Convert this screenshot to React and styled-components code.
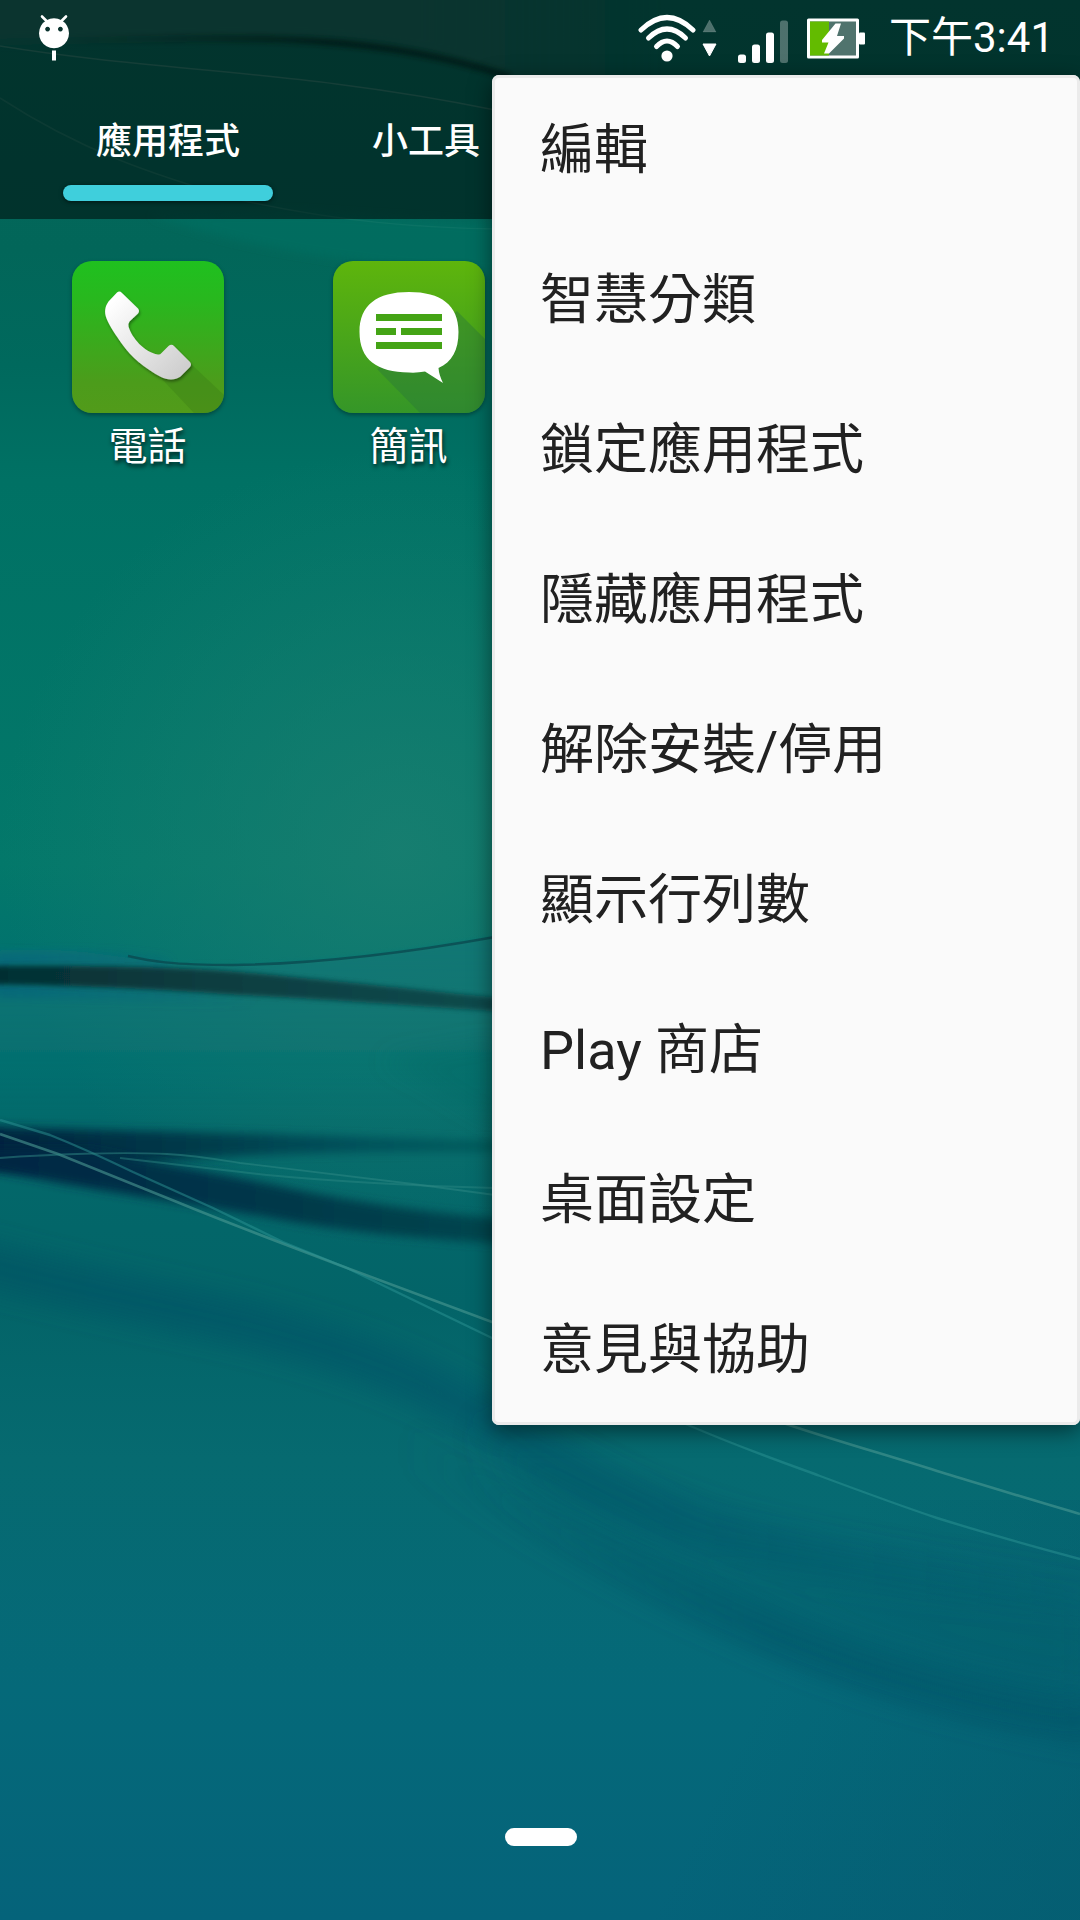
import React from "react";
import styled, { createGlobalStyle } from "styled-components";

const GlobalStyle = createGlobalStyle`
  *, *::before, *::after { box-sizing: border-box; }
  html, body { margin: 0; padding: 0; background: #05657a; }
  body { font-family: Roboto, "Noto Sans CJK TC", sans-serif; }
`;

const Screen = styled.div`
  position: relative;
  width: 1080px;
  height: 1920px;
  overflow: hidden;
  display: flex;
  flex-direction: column;
  color: #fff;
`;

const WallpaperArt = styled.svg`
  position: absolute;
  inset: 0;
  display: block;
`;

const Header = styled.header`
  position: relative;
  flex: none;
  height: 219px;
  display: flex;
  flex-direction: column;
  background: rgba(0, 0, 0, 0.5);
`;

const StatusBar = styled.div`
  height: 75px;
  display: flex;
  align-items: center;
  justify-content: space-between;
  padding: 0 26px 0 36px;
`;

const StatusGroup = styled.div`
  display: flex;
  align-items: center;
`;

const StatusIcon = styled.svg`
  display: block;
  flex: none;
  margin-right: ${(p) => p.$gap || 0}px;
`;

const Clock = styled.time`
  font-size: 42px;
  line-height: 75px;
  white-space: nowrap;
`;

const Tabs = styled.nav`
  display: flex;
  padding-left: 39px;
`;

const Tab = styled.div`
  width: 258px;
  display: flex;
  flex-direction: column;
  align-items: center;
  font-size: 36px;
  font-weight: 500;
  line-height: 54px;
  padding-top: 40px;
`;

const TabMarker = styled.span`
  width: 210px;
  height: 16px;
  margin-top: 16px;
  border-radius: 8px;
  background: #3fcfdc;
  box-shadow: 0 1px 4px rgba(0, 0, 0, 0.6);
`;

const AppGrid = styled.main`
  position: relative;
  flex: 1;
  display: flex;
  align-items: flex-start;
  padding: 42px 0 0 17px;
`;

const AppCell = styled.div`
  width: 261px;
  display: flex;
  flex-direction: column;
  align-items: center;
  gap: 6px;
`;

const AppIcon = styled.svg`
  display: block;
  border-radius: 20px;
  box-shadow: 0 2px 4px rgba(0, 0, 0, 0.35);
`;

const AppLabel = styled.span`
  font-size: 39px;
  line-height: 56px;
  text-shadow: 1px 3px 4px rgba(0, 0, 0, 0.7);
`;

const PageIndicator = styled.footer`
  position: relative;
  flex: none;
  height: 92px;
  display: flex;
  justify-content: center;
  padding-left: 2px;
`;

const PagePill = styled.span`
  width: 72px;
  height: 18px;
  border-radius: 9px;
  background: #fff;
`;

const Menu = styled.ul`
  position: absolute;
  top: 75px;
  right: 0;
  width: 588px;
  margin: 0;
  padding: 0;
  list-style: none;
  display: flex;
  flex-direction: column;
  background: #fafafa;
  border-radius: 7px;
  box-shadow: inset 0 0 0 3px #ebebeb, 0 6px 22px rgba(0, 0, 0, 0.5);
`;

const MenuItem = styled.li`
  height: 150px;
  display: flex;
  align-items: center;
  padding: 2px 48px 0;
  font-size: 54px;
  line-height: 80px;
  color: #212121;
  white-space: pre;
`;

const MENU_ITEMS = [
  "編輯",
  "智慧分類",
  "鎖定應用程式",
  "隱藏應用程式",
  "解除安裝/停用",
  "顯示行列數",
  "Play 商店",
  "桌面設定",
  "意見與協助",
];

function Wallpaper() {
  return (
    <WallpaperArt width="1080" height="1920" viewBox="0 0 1080 1920" aria-hidden="true">
      <defs>
        <linearGradient id="base" x1="0" y1="0" x2="0" y2="1">
          <stop offset="0" stopColor="#04695c" />
          <stop offset="0.13" stopColor="#026659" />
          <stop offset="0.19" stopColor="#00695d" />
          <stop offset="0.25" stopColor="#007164" />
          <stop offset="0.45" stopColor="#03786a" />
          <stop offset="0.52" stopColor="#00706f" />
          <stop offset="0.6" stopColor="#03686a" />
          <stop offset="0.68" stopColor="#036468" />
          <stop offset="0.76" stopColor="#066a70" />
          <stop offset="0.88" stopColor="#056979" />
          <stop offset="1" stopColor="#05637a" />
        </linearGradient>
        <radialGradient id="glow" gradientUnits="userSpaceOnUse" cx="400" cy="850" r="400">
          <stop offset="0" stopColor="#1b7f71" stopOpacity="0.8" />
          <stop offset="1" stopColor="#1b7f71" stopOpacity="0" />
        </radialGradient>
        <linearGradient id="topSheen" gradientUnits="userSpaceOnUse" x1="420" y1="0" x2="660" y2="0">
          <stop offset="0" stopColor="#18695f" />
          <stop offset="1" stopColor="#18695f" stopOpacity="0" />
        </linearGradient>
        <linearGradient id="crest" gradientUnits="userSpaceOnUse" x1="60" y1="0" x2="330" y2="0">
          <stop offset="0" stopColor="#00261c" stopOpacity="0" />
          <stop offset="1" stopColor="#00261c" stopOpacity="0.65" />
        </linearGradient>
        <linearGradient id="midFill" gradientUnits="userSpaceOnUse" x1="0" y1="940" x2="0" y2="1120">
          <stop offset="0" stopColor="#127576" stopOpacity="0.7" />
          <stop offset="0.5" stopColor="#127576" stopOpacity="0.4" />
          <stop offset="1" stopColor="#127576" stopOpacity="0" />
        </linearGradient>
        <linearGradient id="bandA" gradientUnits="userSpaceOnUse" x1="0" y1="0" x2="500" y2="0">
          <stop offset="0" stopColor="#052f33" />
          <stop offset="0.5" stopColor="#0b3f42" />
          <stop offset="1" stopColor="#0b4a4c" />
        </linearGradient>
        <linearGradient id="bandB" gradientUnits="userSpaceOnUse" x1="0" y1="0" x2="500" y2="0">
          <stop offset="0" stopColor="#00243f" />
          <stop offset="0.35" stopColor="#003848" />
          <stop offset="0.7" stopColor="#03505a" />
          <stop offset="1" stopColor="#065c5c" />
        </linearGradient>
        <linearGradient id="bandC" gradientUnits="userSpaceOnUse" x1="0" y1="0" x2="500" y2="0">
          <stop offset="0" stopColor="#002643" />
          <stop offset="0.4" stopColor="#003348" />
          <stop offset="1" stopColor="#04464e" />
        </linearGradient>
        <linearGradient id="edge" gradientUnits="userSpaceOnUse" x1="0" y1="0" x2="260" y2="0">
          <stop offset="0" stopColor="#005c80" stopOpacity="0.5" />
          <stop offset="1" stopColor="#005c80" stopOpacity="0" />
        </linearGradient>
        <linearGradient id="foldA" gradientUnits="userSpaceOnUse" x1="0" y1="0" x2="1080" y2="0">
          <stop offset="0" stopColor="#004f63" stopOpacity="0.55" />
          <stop offset="0.6" stopColor="#00526a" stopOpacity="0.5" />
          <stop offset="1" stopColor="#00526a" stopOpacity="0.12" />
        </linearGradient>
        <linearGradient id="foldB" gradientUnits="userSpaceOnUse" x1="400" y1="0" x2="760" y2="0">
          <stop offset="0" stopColor="#005468" stopOpacity="0" />
          <stop offset="1" stopColor="#005468" stopOpacity="0.55" />
        </linearGradient>
        <linearGradient id="corner" gradientUnits="userSpaceOnUse" x1="760" y1="1700" x2="1080" y2="1860">
          <stop offset="0" stopColor="#045a6b" stopOpacity="0" />
          <stop offset="1" stopColor="#045a6b" stopOpacity="0.5" />
        </linearGradient>
        <filter id="b2" x="-10%" y="-50%" width="120%" height="200%"><feGaussianBlur stdDeviation="2.5" /></filter>
        <filter id="b6" x="-10%" y="-50%" width="120%" height="200%"><feGaussianBlur stdDeviation="5" /></filter>
        <filter id="b14" x="-10%" y="-50%" width="120%" height="200%"><feGaussianBlur stdDeviation="12" /></filter>
        <filter id="b24" x="-20%" y="-50%" width="140%" height="200%"><feGaussianBlur stdDeviation="24" /></filter>
      </defs>
      <rect width="1080" height="1920" fill="url(#base)" />
      <rect width="1080" height="1920" fill="url(#glow)" />
      <rect y="1500" width="1080" height="420" fill="url(#corner)" />
      {/* upper ribbon behind the header */}
      <path d="M-20 -20H700V150C620 120 560 94 510 76C420 42 340 35 240 37C150 39 60 41 -20 42Z" fill="url(#topSheen)" filter="url(#b6)" />
      <path d="M60 41C260 36 380 34 510 77" stroke="url(#crest)" strokeWidth="7" fill="none" filter="url(#b2)" />
      <path d="M0 46C160 72 300 70 495 110" stroke="#5b9488" strokeOpacity="0.45" strokeWidth="1.5" fill="none" />
      <path d="M0 98C80 150 150 174 240 200C340 222 420 228 500 229" stroke="#4c9484" strokeOpacity="0.3" strokeWidth="1.5" fill="none" />
      <path d="M150 215C240 246 320 258 420 268L510 275V225L300 212Z" fill="#007262" fillOpacity="0.6" filter="url(#b6)" />
      {/* middle ribbons */}
      <path d="M-20 952C60 945 110 955 160 963C260 970 380 957 510 934V1120H-20Z" fill="url(#midFill)" filter="url(#b2)" />
      <path d="M-20 961C60 958 120 956 170 965M-20 990C80 990 160 996 260 1000" fill="none" stroke="url(#edge)" strokeWidth="14" filter="url(#b6)" />
      <path d="M-20 966C100 965 180 967 240 972C300 977 420 990 520 1000V1013C440 1008 340 1000 240 995C140 988 60 985 -20 984Z" fill="url(#bandA)" filter="url(#b2)" />
      <path d="M128 956C150 961 170 965 233 965C317 964 400 954 495 937" stroke="#0a4c52" strokeOpacity="0.85" strokeWidth="2.4" fill="none" />
      <path d="M380 1060C430 1080 460 1105 500 1125V1040Z" fill="#0a6660" fillOpacity="0.35" filter="url(#b14)" />
      <path d="M-20 1126C80 1130 200 1132 330 1136L520 1142V1152C340 1151 200 1155 130 1165L-20 1170Z" fill="url(#bandB)" filter="url(#b6)" />
      <path d="M-20 1150H90C150 1162 210 1172 270 1184C340 1200 430 1214 520 1220V1244C420 1240 330 1230 260 1216C180 1202 90 1190 -20 1168Z" fill="url(#bandC)" filter="url(#b6)" />
      {/* lower folds */}
      <path d="M-40 1258C60 1285 150 1302 250 1325C340 1350 420 1372 520 1440C600 1495 700 1530 780 1548C880 1570 980 1585 1100 1595" stroke="url(#foldA)" strokeWidth="46" fill="none" filter="url(#b14)" />
      <path d="M400 1440C560 1535 650 1580 742 1618C850 1668 960 1700 1100 1724" stroke="url(#foldB)" strokeWidth="46" fill="none" filter="url(#b14)" />
      <path d="M480 1420L700 1540L1100 1610V1700C900 1680 700 1590 520 1480Z" fill="#025868" fillOpacity="0.35" filter="url(#b24)" />
      {/* fine highlights */}
      <path d="M0 1134L58 1154C100 1171 140 1187 177 1202C235 1226 290 1246 347 1268L492 1322C590 1357 690 1392 789 1425C840 1442 890 1456 937 1471C990 1487 1035 1501 1080 1514" stroke="#4b9a92" strokeOpacity="0.6" strokeWidth="2.6" fill="none" />
      <path d="M0 1120L50 1135C80 1147 106 1159 133 1172L213 1208L283 1242L347 1268L492 1338C560 1370 625 1399 688 1425C730 1443 770 1458 812 1473C855 1489 895 1504 937 1518C985 1533 1035 1547 1080 1559" stroke="#2c9494" strokeOpacity="0.5" strokeWidth="2.4" fill="none" />
      <path d="M0 1158C50 1154 120 1152 167 1154C200 1156 220 1160 240 1163L413 1184L495 1195" stroke="#2f8a86" strokeOpacity="0.5" strokeWidth="1.8" fill="none" />
      <path d="M120 1158L267 1175C340 1182 420 1186 495 1188" stroke="#2f8a86" strokeOpacity="0.45" strokeWidth="1.8" fill="none" />
    </WallpaperArt>
  );
}

function DebugIcon() {
  return (
    <StatusIcon width="36" height="50" viewBox="36 13.500 36 50">
      <path d="M42 17L47 22M66 17L61 22" stroke="#fff" strokeWidth="2.6" strokeLinecap="round" />
      <path fillRule="evenodd" fill="#fff" d="M54 18.700a15 15 0 1 0 .01 0ZM47.600 27.200a2.400 2.400 0 1 1-.01 0ZM60.400 27.200a2.400 2.400 0 1 1-.01 0Z" />
      <rect x="52" y="51" width="4" height="10" fill="#fff" />
    </StatusIcon>
  );
}

function WifiIcon() {
  return (
    <StatusIcon $gap={20} width="80" height="50" viewBox="638 12.500 80 50">
      <g fill="none" stroke="#fff" strokeWidth="5" strokeLinecap="round">
        <path d="M642 29.500Q668 4.500 694 29.500" />
        <path d="M649.500 37.500Q668 19.500 686.500 37.500" />
        <path d="M657.500 46Q668 35 678.500 46" />
      </g>
      <circle cx="668" cy="55.500" r="5.600" fill="#fff" />
      <path d="M710.500 19.500L717 31.500H704Z" fill="#fff" fillOpacity="0.3" stroke="#fff" strokeOpacity="0.1" strokeLinejoin="round" />
      <path d="M710.500 55.500L717 43.500H704Z" fill="#fff" stroke="#fff" strokeLinejoin="round" />
    </StatusIcon>
  );
}

function SignalIcon() {
  return (
    <StatusIcon $gap={19} width="51" height="50" viewBox="738 12.500 51 50">
      <g fill="#fff">
        <rect x="739" y="54" width="8" height="8.500" rx="2.5" />
        <rect x="753" y="44" width="8" height="18.500" rx="2.5" />
        <rect x="767" y="32" width="8" height="30.500" rx="2.5" />
        <rect x="781" y="20" width="8" height="42.500" rx="2.5" fillOpacity="0.3" />
      </g>
    </StatusIcon>
  );
}

function BatteryIcon() {
  return (
    <StatusIcon $gap={24} width="58" height="50" viewBox="808 12.500 58 50">
      <rect x="808" y="18" width="52" height="40" rx="1.500" fill="#fff" />
      <rect x="860" y="32" width="6" height="12" rx="1" fill="#fff" />
      <rect x="811" y="21" width="46" height="34" fill="#50736d" />
      <rect x="811" y="21" width="19" height="34" fill="#63bb00" />
      <path d="M836.500 23H842L838 35.500H845V38L830 53H825L829.500 42H823V39.500Z" fill="#fff" />
    </StatusIcon>
  );
}

function PhoneIcon() {
  return (
    <AppIcon width="152" height="152" viewBox="0 0 152 152">
      <defs>
        <linearGradient id="phoneBg" x1="0" y1="0" x2="0" y2="1">
          <stop offset="0" stopColor="#1fc01f" />
          <stop offset="0.25" stopColor="#28b81e" />
          <stop offset="0.8" stopColor="#4c9c1b" />
          <stop offset="1" stopColor="#529b1a" />
        </linearGradient>
        <linearGradient id="handset" x1="0" y1="0" x2="1" y2="1">
          <stop offset="0.1" stopColor="#fff" />
          <stop offset="0.9" stopColor="#cfcfcf" />
        </linearGradient>
        <filter id="handShadow" x="-20%" y="-20%" width="140%" height="140%">
          <feDropShadow dx="1" dy="2" stdDeviation="1.500" floodOpacity="0.4" />
        </filter>
      </defs>
      <rect width="152" height="152" fill="url(#phoneBg)" />
      <path d="M119 103L152 134V152H122L88 116Z" fill="#2f6a10" fillOpacity="0.22" />
      <path
        d="M45 31.500Q47.500 29.500 50 32L66 47.500Q68 50 66 52.500L57.500 60.500Q56 62.500 56.500 65.500C60 77 72 91 86 93.500Q88 94 89.500 92L96.500 85Q99.500 82.500 102 85L118 101Q120 103.500 118 106L108.500 115.500C103 119.500 95 119 89 116C73 107.500 59 96 50 83C44.500 75 38 66 34.500 57.500C32 51 33 45.500 36.500 40.500Z"
        fill="url(#handset)"
        filter="url(#handShadow)"
      />
    </AppIcon>
  );
}

function MessageIcon() {
  return (
    <AppIcon width="152" height="152" viewBox="0 0 152 152">
      <defs>
        <linearGradient id="smsBg" x1="0" y1="0" x2="0" y2="1">
          <stop offset="0" stopColor="#5eb50c" />
          <stop offset="1" stopColor="#359628" />
        </linearGradient>
      </defs>
      <rect width="152" height="152" fill="url(#smsBg)" />
      <path d="M124 50L152 78V152H87L44 108Z" fill="#28783a" fillOpacity="0.42" />
      <path
        d="M76 31C108 31 125.500 44 125.500 71C125.500 89 119 101 105.500 107Q106 114 110 122L92 110.500Q84 112 76 111.500C44 111 26.500 99 26.500 71C26.500 44 44 31 76 31Z"
        fill="#fff"
      />
      <g fill="#44a415">
        <rect x="43" y="53" width="66" height="7" />
        <rect x="43" y="67" width="20" height="7" />
        <rect x="68" y="67" width="41" height="7" />
        <rect x="43" y="81" width="66" height="7" />
      </g>
    </AppIcon>
  );
}

export default function App() {
  return (
    <>
      <GlobalStyle />
      <Screen>
        <Wallpaper />
        <Header>
          <StatusBar>
            <DebugIcon />
            <StatusGroup>
              <WifiIcon />
              <SignalIcon />
              <BatteryIcon />
              <Clock>下午3:41</Clock>
            </StatusGroup>
          </StatusBar>
          <Tabs>
            <Tab>
              應用程式
              <TabMarker />
            </Tab>
            <Tab>小工具</Tab>
          </Tabs>
        </Header>
        <AppGrid>
          <AppCell>
            <PhoneIcon />
            <AppLabel>電話</AppLabel>
          </AppCell>
          <AppCell>
            <MessageIcon />
            <AppLabel>簡訊</AppLabel>
          </AppCell>
        </AppGrid>
        <PageIndicator>
          <PagePill />
        </PageIndicator>
        <Menu>
          {MENU_ITEMS.map((label) => (
            <MenuItem key={label}>{label}</MenuItem>
          ))}
        </Menu>
      </Screen>
    </>
  );
}
